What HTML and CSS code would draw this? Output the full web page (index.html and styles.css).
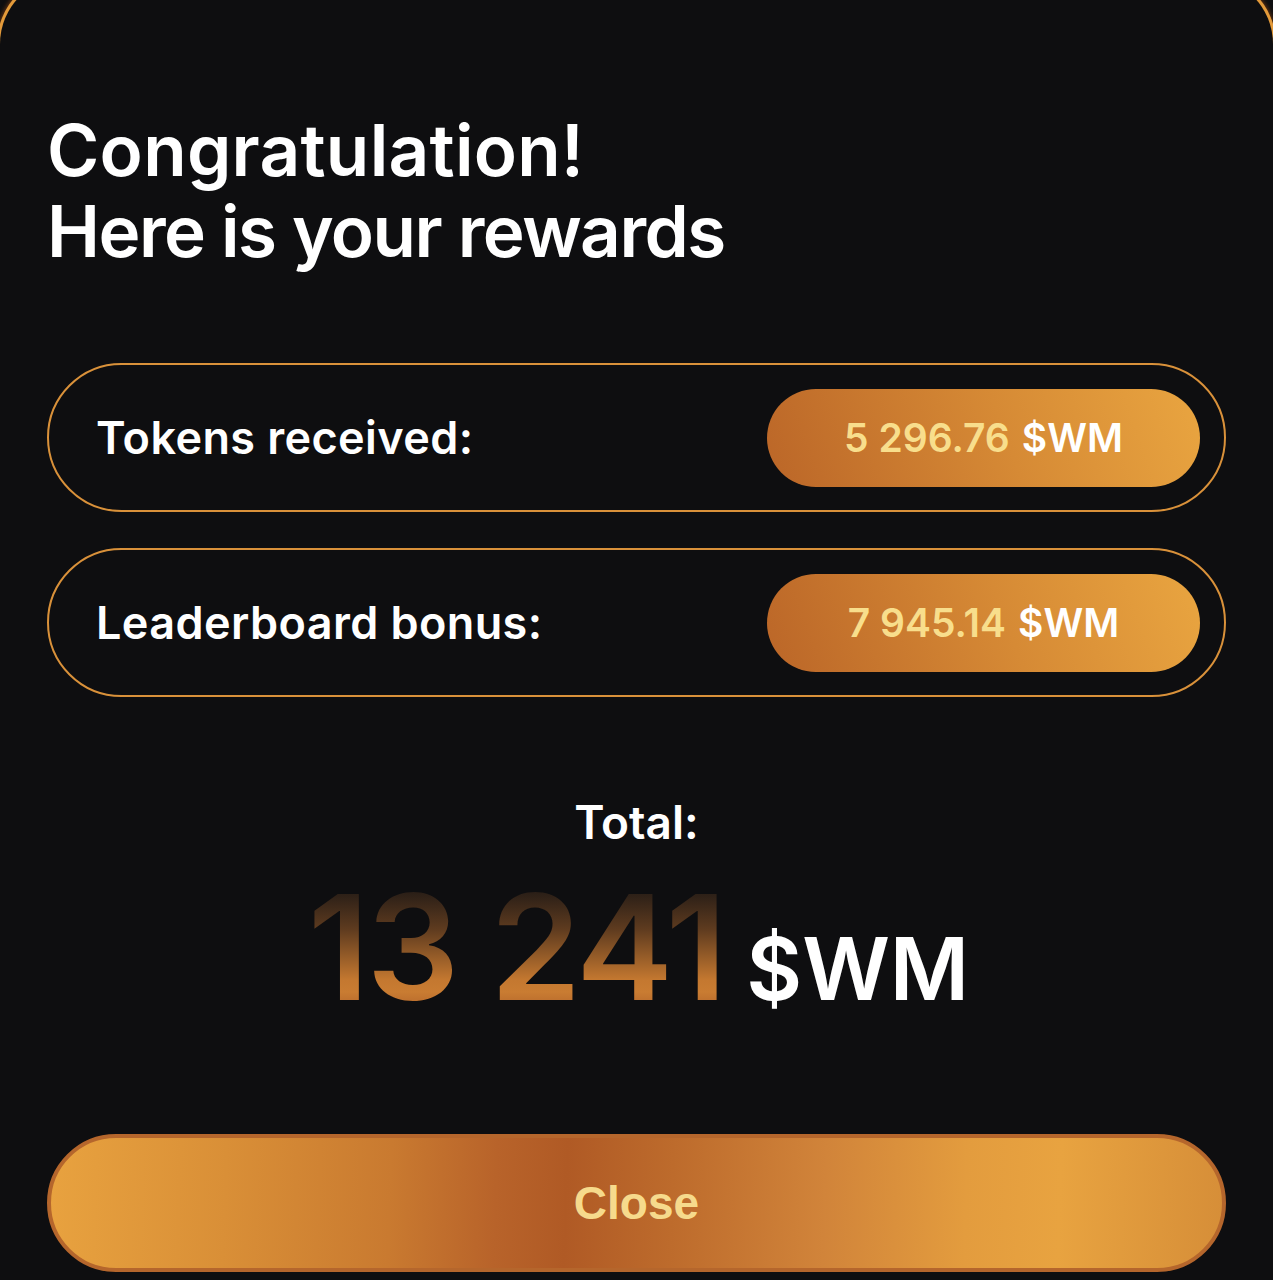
FILE: index.html
```html
<!DOCTYPE html>
<html lang="en">
<head>
<meta charset="utf-8">
<title>Rewards</title>
<link rel="stylesheet" href="styles.css">
</head>
<body>
<div class="sheet">
  <h1 class="title"><span class="title-first">Congratulation!</span><br>Here is your rewards</h1>
  <div class="rows">
    <div class="row">
      <span class="label">Tokens received:</span>
      <span class="value"><span class="num">5 296.76</span> <span class="cur">$WM</span></span>
    </div>
    <div class="row">
      <span class="label">Leaderboard bonus:</span>
      <span class="value"><span class="num">7 945.14</span> <span class="cur">$WM</span></span>
    </div>
  </div>
  <div class="total">
    <div class="total-label">Total:</div>
    <div class="total-amount"><span class="big">13 241</span><span class="big-cur">$WM</span></div>
  </div>
  <button class="close">Close</button>
</div>
</body>
</html>
```

FILE: styles.css
```css
html, body {
  margin: 0;
  padding: 0;
  background: #0e0e10;
}
body {
  font-family: Inter, "Noto Sans", sans-serif;
  color: #fff;
  overflow: hidden;
}
.sheet {
  margin: -26px -3px 0;
  min-height: 1400px;
  border: 3px solid #e39a3a;
  border-bottom: none;
  border-radius: 70px 70px 0 0;
  box-shadow: 0 0 4px 1px #6a3612;
  background: #0e0e10;
  padding: 0 47px;
  display: flex;
  flex-direction: column;
}
.title {
  margin: 133px 0 0;
  font-size: 71px;
  line-height: 81px;
  font-weight: 600;
  letter-spacing: -1.5px;
}
.title-first {
  letter-spacing: 0.3px;
}
.rows {
  margin-top: 91px;
  display: flex;
  flex-direction: column;
  gap: 36px;
}
.row {
  height: 145px;
  border: 2px solid #d9913a;
  border-radius: 80px;
  display: flex;
  align-items: center;
  justify-content: space-between;
  padding: 0 24px 0 47px;
}
.label {
  font-size: 45px;
  font-weight: 600;
  letter-spacing: 0.4px;
}
.value {
  width: 433px;
  height: 98px;
  border-radius: 49px;
  background: linear-gradient(70deg, #bb6628 0%, #d68a35 55%, #e9a540 100%);
  display: flex;
  align-items: center;
  justify-content: center;
  gap: 12px;
  font-size: 39px;
  font-weight: 600;
}
.num { color: #f8de8c; }
.cur { color: #fff; }
.total {
  margin-top: 96px;
  display: flex;
  flex-direction: column;
  align-items: center;
}
.total-label {
  font-size: 46px;
  line-height: 58px;
  font-weight: 600;
}
.total-amount {
  margin-top: 21px;
  display: flex;
  align-items: baseline;
  gap: 22px;
  height: 150px;
  padding-left: 4px;
}
.big {
  display: inline-block;
  font-size: 146px;
  line-height: 150px;
  font-weight: 600;
  letter-spacing: -3px;
  background: linear-gradient(180deg, #2b1f17 14%, #5e3b1f 38%, #c47830 72%, #c97c32 80%, #b3652a 92%);
  -webkit-background-clip: text;
  background-clip: text;
  color: transparent;
}
.big-cur {
  font-size: 86px;
  line-height: 150px;
  font-weight: 600;
  color: #fff;
}
.close {
  margin-top: 112px;
  height: 138px;
  border: 4px solid #b5662c;
  border-radius: 70px;
  background: linear-gradient(92deg, #e8a23f 0%, #d98f37 15%, #c97a30 29%, #b8632a 38%, #b05a25 44%, #bd6b2c 53%, #d1843a 66%, #e39c3e 78%, #e8a340 86%, #d68e38 100%);
  font-family: "Liberation Sans", Arial, sans-serif;
  font-weight: 700;
  font-size: 46px;
  color: #f6da8c;
  cursor: pointer;
}
```
